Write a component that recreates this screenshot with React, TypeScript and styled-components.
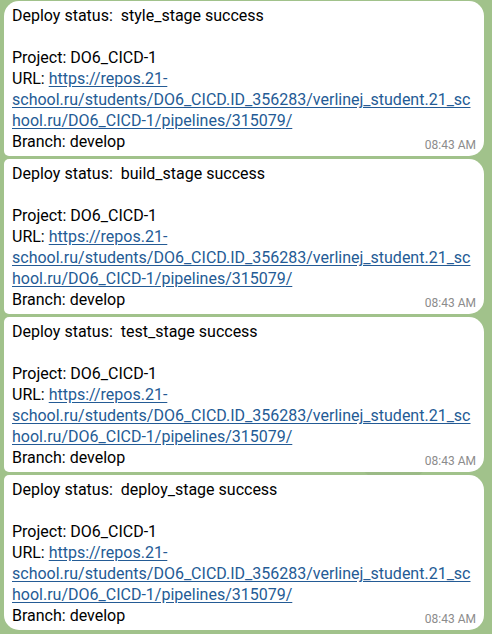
import React from "react";
import styled, { createGlobalStyle } from "styled-components";

const Global = createGlobalStyle`
  html, body { margin: 0; padding: 0; }
  body {
    width: 492px;
    height: 634px;
    overflow: hidden;
    background: #a1c28b;
    font-family: Roboto, "Liberation Sans", sans-serif;
  }
`;

const Chat = styled.div`
  display: flex;
  flex-direction: column;
  gap: 3px;
  padding: 1px 8px 0 4px;
  height: 634px;
  box-sizing: border-box;
  background-color: #a1c28b;
  background-image:
    radial-gradient(circle at 20% 30%, rgba(255,255,255,0.08) 0 30px, transparent 31px),
    radial-gradient(circle at 80% 70%, rgba(0,0,0,0.04) 0 40px, transparent 41px);
`;

type Pos = "first" | "middle" | "last";

const Bubble = styled.div<{ $pos: Pos }>`
  position: relative;
  background: #ffffff;
  color: #000;
  font-size: 16px;
  line-height: 21px;
  padding: 4px 8px 4px 8px;
  height: 155px;
  box-sizing: border-box;
  border-radius: ${(p) =>
    p.$pos === "first"
      ? "15px 15px 15px 5px"
      : p.$pos === "last"
      ? "5px 15px 15px 15px"
      : "5px 15px 15px 5px"};
`;

const Line = styled.div`
  white-space: nowrap;
  min-height: 21px;
`;

const Link = styled.a`
  color: #245b95;
  text-decoration: underline;
  text-underline-offset: 2px;
`;

const Time = styled.span`
  position: absolute;
  right: 8px;
  bottom: 3px;
  font-size: 12px;
  line-height: 16px;
  color: #8c8c8c;
`;

const stages = ["style_stage", "build_stage", "test_stage", "deploy_stage"];

export default function App() {
  return (
    <>
      <Global />
      <Chat>
        {stages.map((s, i) => (
          <Bubble
            key={s}
            $pos={i === 0 ? "first" : i === stages.length - 1 ? "last" : "middle"}
          >
            <Line>Deploy status:&nbsp; {s} success</Line>
            <Line />
            <Line>Project: DO6_CICD-1</Line>
            <Line>
              URL: <Link href="#">https://repos.21-</Link>
            </Line>
            <Line>
              <Link href="#">school.ru/students/DO6_CICD.ID_356283/verlinej_student.21_sc</Link>
            </Line>
            <Line>
              <Link href="#">hool.ru/DO6_CICD-1/pipelines/315079/</Link>
            </Line>
            <Line>Branch: develop</Line>
            <Time>08:43 AM</Time>
          </Bubble>
        ))}
      </Chat>
    </>
  );
}
